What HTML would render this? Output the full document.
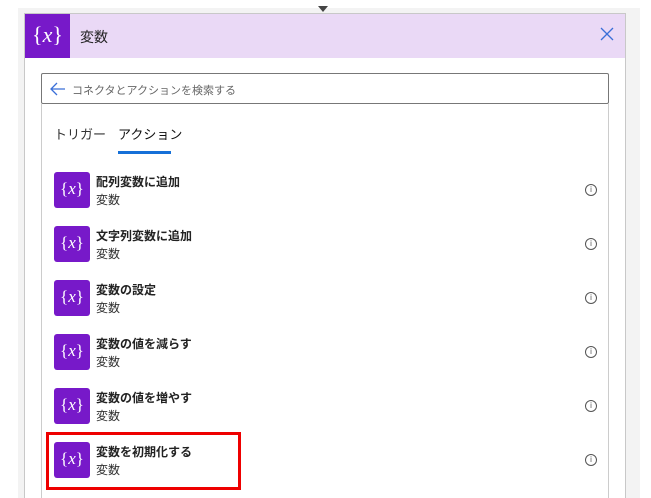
<!DOCTYPE html>
<html style="width:651px;height:498px;overflow:hidden"><head><meta charset="utf-8"><style>
*{margin:0;padding:0;box-sizing:border-box}
body{width:651px;height:498px;background:#fff;font-family:"Liberation Sans","Noto Sans CJK JP",sans-serif;position:relative;overflow:hidden}
.bg{position:absolute;left:18px;top:8px;width:622px;height:490px;background:#f3f3f3}
.card{position:absolute;left:24px;top:13px;width:602px;height:485px;background:#fff;border:1px solid #c8c8c8;border-bottom:none;overflow:hidden}
.hdr{height:44px;background:#ead9f6;position:relative}
.hic{position:absolute;left:0;top:0;width:45px;height:44px;background:#7719c9;color:#fff;font:22px "Liberation Serif",serif;text-align:center;line-height:42px}
.hic i,.ic i{font-style:italic}
.ht{position:absolute;left:55px;top:13px;font-size:14px;color:#222}
.x{position:absolute;right:10px;top:12px;width:16px;height:16px}
.search{position:absolute;left:16px;top:59px;width:568px;height:31px;border:1px solid #777;border-radius:2px}
.search span{position:absolute;left:30px;top:8px;font-size:11px;color:#666}
.panel{position:absolute;left:16px;top:90px;width:568px;height:395px;border:1px solid #ccc;border-top:none;border-bottom:none}
.tab{position:absolute;top:20px;font-size:13px;color:#333}
.ul{position:absolute;left:76px;top:47px;width:53px;height:3px;background:#1570d8}
.item{position:absolute;left:12px;width:540px;height:36px}
.ic{position:absolute;left:0;top:0;width:36px;height:36px;border-radius:3px;background:#7719c9;color:#fff;font:17px "Liberation Serif",serif;text-align:center;line-height:34px}
.t1{position:absolute;left:42px;top:1px;font-size:12px;font-weight:bold;color:#222}
.t2{position:absolute;left:42px;top:19px;font-size:12px;color:#333}
.i{position:absolute;left:531px;top:12px;width:12px;height:12px;border:1px solid #555;border-radius:50%;font-size:8px;text-align:center;line-height:10px;color:#555}
.red{position:absolute;left:46px;top:432px;width:195px;height:58px;border:3px solid #e00}
.tri{position:absolute;left:318px;top:6px;width:0;height:0;border-left:5px solid transparent;border-right:5px solid transparent;border-top:6px solid #444}
</style></head><body>
<div class="bg"></div>
<div class="tri"></div>
<div class="card">
<div class="hdr"><div class="hic">{<i>x</i>}</div><div class="ht">変数</div>
<svg class="x" viewBox="0 0 16 16"><path d="M2 2L14 14M14 2L2 14" stroke="#3a6fd8" stroke-width="1.3"/></svg></div>
<div class="search"><svg style="position:absolute;left:8px;top:8px" width="16" height="14" viewBox="0 0 16 14"><path d="M15 7H2M7 1L1 7L7 13" stroke="#3a6fd8" stroke-width="1.3" fill="none"/></svg><span>コネクタとアクションを検索する</span></div>
<div class="panel">
<div class="tab" style="left:12px">トリガー</div>
<div class="tab" style="left:76px;color:#111">アクション</div>
<div class="ul"></div>
<div class="item" style="top:68px"><div class="ic">{<i>x</i>}</div><div class="t1">配列変数に追加</div><div class="t2">変数</div><div class="i">i</div></div>
<div class="item" style="top:122px"><div class="ic">{<i>x</i>}</div><div class="t1">文字列変数に追加</div><div class="t2">変数</div><div class="i">i</div></div>
<div class="item" style="top:176px"><div class="ic">{<i>x</i>}</div><div class="t1">変数の設定</div><div class="t2">変数</div><div class="i">i</div></div>
<div class="item" style="top:230px"><div class="ic">{<i>x</i>}</div><div class="t1">変数の値を減らす</div><div class="t2">変数</div><div class="i">i</div></div>
<div class="item" style="top:284px"><div class="ic">{<i>x</i>}</div><div class="t1">変数の値を増やす</div><div class="t2">変数</div><div class="i">i</div></div>
<div class="item" style="top:338px"><div class="ic">{<i>x</i>}</div><div class="t1">変数を初期化する</div><div class="t2">変数</div><div class="i">i</div></div>
</div>
</div>
<div class="red"></div>
</body></html>
